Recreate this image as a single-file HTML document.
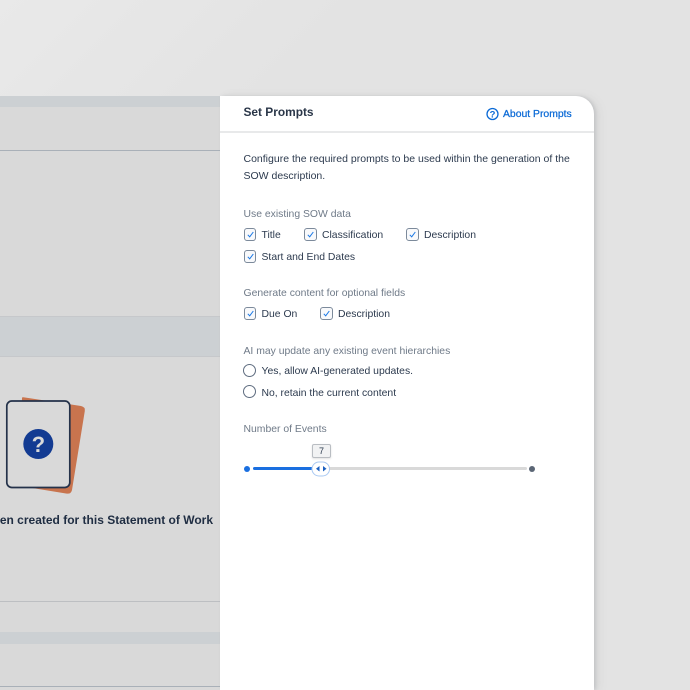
<!DOCTYPE html>
<html>
<head>
<meta charset="utf-8">
<style>
html,body{margin:0;padding:0;width:690px;height:690px;overflow:hidden;}
body{position:relative;background:#e3e3e3;font-family:"Liberation Sans",sans-serif;}
.a{position:absolute;}
.t{position:absolute;white-space:nowrap;font-size:10.4px;line-height:14px;color:#2c3a4e;}
.l{color:#6f7a88;}
.cb{position:absolute;width:10.500px;height:11px;border:1px solid #7c8a9b;border-radius:3px;background:#f8f9fb;}
.cb svg{position:absolute;left:0;top:0;}
.r{position:absolute;width:11px;height:11px;border:1px solid #5f6d80;border-radius:50%;background:#fff;}
</style>
</head>
<body>
<div class="a" style="left:0;top:0;width:690px;height:200px;background:linear-gradient(135deg,#e9e9e9 0%,#e3e3e3 40%);"></div>
<div class="a" style="left:0;top:96px;width:220px;height:594px;background:#d9d9d9;"></div>
<div class="a" style="left:0;top:96px;width:220px;height:11px;background:#ccd0d3;"></div>
<div class="a" style="left:0;top:150px;width:220px;height:1px;background:#a9b0b8;"></div>
<div class="a" style="left:0;top:316px;width:220px;height:41px;background:#ccd0d3;border-top:1px solid #c6c8cb;border-bottom:1px solid #c6c8cb;box-sizing:border-box;"></div>
<div class="a" style="left:0;top:601px;width:220px;height:1px;background:#bdbfc2;"></div>
<div class="a" style="left:0;top:632px;width:220px;height:12px;background:#ccd0d3;"></div>
<div class="a" style="left:0;top:686px;width:220px;height:1px;background:#a9b0b8;"></div>

<svg class="a" style="left:0;top:390px;" width="100" height="110" viewBox="0 0 100 110">
<path d="M22 7.500 Q23 7 25 7.500 L81 16 Q85.500 17 84.800 21 L72 100 Q71 104.500 66 103.500 L20 96 Z" fill="#c8744e"/>
<rect x="6.800" y="11" width="63" height="86.500" rx="5" fill="#d9d9d9" stroke="#24324a" stroke-width="1.700"/>
<circle cx="38.300" cy="54" r="15" fill="#133b92"/>
<text x="38.300" y="62" text-anchor="middle" font-family="Liberation Sans, sans-serif" font-weight="700" font-size="22" fill="#d9d9d9">?</text>
</svg>
<div class="t" style="right:477px;top:513px;font-size:12px;font-weight:700;color:#1f2d42;">en created for this Statement of Work</div>

<div class="a" style="left:220px;top:96px;width:374px;height:594px;background:#fff;border-radius:0 18px 0 0;box-shadow:2px 0 3px rgba(140,145,150,.28),6px 0 8px rgba(160,160,160,.12);"></div>
<div class="a" style="left:220px;top:131px;width:374px;height:2px;background:#e8e9ea;"></div>

<div class="t" style="left:243.500px;top:105px;font-size:11.900px;font-weight:700;color:#2a3648;">Set Prompts</div>
<svg class="a" style="left:486px;top:107px;" width="14" height="14" viewBox="0 0 14 14">
<circle cx="6.500" cy="7" r="5.500" fill="none" stroke="#0b6ad6" stroke-width="1.300"/>
<text x="6.500" y="10.400" text-anchor="middle" font-family="Liberation Sans, sans-serif" font-size="9.500" font-weight="700" fill="#0b6ad6">?</text>
</svg>
<div class="t" style="left:503px;top:108px;font-size:10.400px;color:#0b6ad6;-webkit-text-stroke:0.25px #0b6ad6;">About Prompts</div>

<div class="t" style="left:243.500px;top:152px;font-size:10.500px;">Configure the required prompts to be used within the generation of the</div>
<div class="t" style="left:243.500px;top:169px;font-size:10.500px;">SOW description.</div>

<div class="t l" style="left:243.500px;top:208px;">Use existing SOW data</div>
<div class="cb" style="left:243.500px;top:228px;"><svg width="11" height="11" viewBox="0 0 11 11"><path d="M2.800 5.800 L4.700 7.800 L8.300 3" fill="none" stroke="#1a78e6" stroke-width="1"/></svg></div>
<div class="t" style="left:261.500px;top:229px;">Title</div>
<div class="cb" style="left:304px;top:228px;"><svg width="11" height="11" viewBox="0 0 11 11"><path d="M2.800 5.800 L4.700 7.800 L8.300 3" fill="none" stroke="#1a78e6" stroke-width="1"/></svg></div>
<div class="t" style="left:322px;top:229px;">Classification</div>
<div class="cb" style="left:406px;top:228px;"><svg width="11" height="11" viewBox="0 0 11 11"><path d="M2.800 5.800 L4.700 7.800 L8.300 3" fill="none" stroke="#1a78e6" stroke-width="1"/></svg></div>
<div class="t" style="left:424px;top:229px;">Description</div>
<div class="cb" style="left:243.500px;top:249.500px;"><svg width="11" height="11" viewBox="0 0 11 11"><path d="M2.800 5.800 L4.700 7.800 L8.300 3" fill="none" stroke="#1a78e6" stroke-width="1"/></svg></div>
<div class="t" style="left:261.500px;top:251px;">Start and End Dates</div>

<div class="t l" style="left:243.500px;top:287px;">Generate content for optional fields</div>
<div class="cb" style="left:243.500px;top:306.500px;"><svg width="11" height="11" viewBox="0 0 11 11"><path d="M2.800 5.800 L4.700 7.800 L8.300 3" fill="none" stroke="#1a78e6" stroke-width="1"/></svg></div>
<div class="t" style="left:261.500px;top:308px;">Due On</div>
<div class="cb" style="left:320px;top:306.500px;"><svg width="11" height="11" viewBox="0 0 11 11"><path d="M2.800 5.800 L4.700 7.800 L8.300 3" fill="none" stroke="#1a78e6" stroke-width="1"/></svg></div>
<div class="t" style="left:338px;top:308px;">Description</div>

<div class="t l" style="left:243.500px;top:345px;">AI may update any existing event hierarchies</div>
<div class="r" style="left:243px;top:364px;"></div>
<div class="t" style="left:261.500px;top:365px;">Yes, allow AI-generated updates.</div>
<div class="r" style="left:243px;top:385px;"></div>
<div class="t" style="left:261.500px;top:387px;">No, retain the current content</div>

<div class="t l" style="left:243.500px;top:423px;">Number of Events</div>

<div class="a" style="left:244px;top:466px;width:6px;height:6px;border-radius:50%;background:#1a6fe0;"></div>
<div class="a" style="left:253px;top:467px;width:68px;height:3px;background:#1a6fe0;border-radius:1.500px;"></div>
<div class="a" style="left:321px;top:467px;width:206px;height:3px;background:#d9d9d9;border-radius:1.500px;"></div>
<div class="a" style="left:529px;top:466px;width:6px;height:6px;border-radius:50%;background:#5b6675;"></div>
<div class="a" style="left:312px;top:444px;width:19px;height:14px;box-sizing:border-box;background:#f1f2f3;border:1px solid #b9bdc2;border-radius:2px;text-align:center;font-size:9px;line-height:13px;color:#2c3a4e;box-shadow:0 1px 2px rgba(0,0,0,.12);">7</div>
<svg class="a" style="left:311px;top:461px;" width="20" height="16" viewBox="0 0 20 16">
<rect x="1" y="1" width="17.500" height="14" rx="7" fill="#fff" stroke="#a9c9f2" stroke-width="1"/>
<path d="M8.500 5 L8.500 10.500 L5 7.750 Z" fill="#1a5fc0"/>
<path d="M12 5 L12 10.500 L15.500 7.750 Z" fill="#1a5fc0"/>
</svg>
</body>
</html>
